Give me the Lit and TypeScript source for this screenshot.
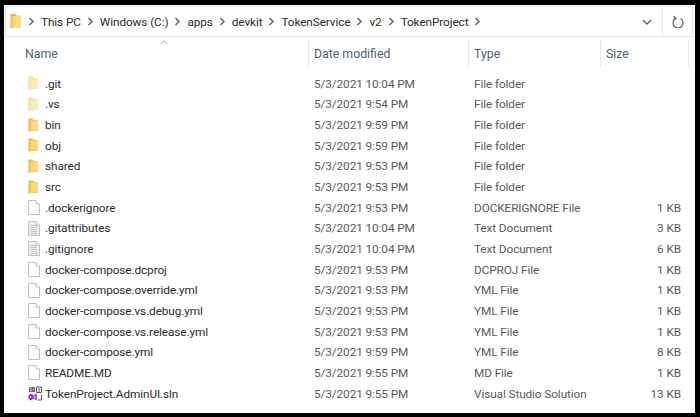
import { LitElement, html, css, svg } from "lit";
import { customElement } from "lit/decorators.js";

type Kind = "folder" | "hidden" | "file" | "text" | "sln";
interface Row { n: string; d: string; t: string; s: string; k: Kind; }

const rows: Row[] = [
  { n: ".git", d: "5/3/2021 10:04 PM", t: "File folder", s: "", k: "hidden" },
  { n: ".vs", d: "5/3/2021 9:54 PM", t: "File folder", s: "", k: "hidden" },
  { n: "bin", d: "5/3/2021 9:59 PM", t: "File folder", s: "", k: "folder" },
  { n: "obj", d: "5/3/2021 9:59 PM", t: "File folder", s: "", k: "folder" },
  { n: "shared", d: "5/3/2021 9:53 PM", t: "File folder", s: "", k: "folder" },
  { n: "src", d: "5/3/2021 9:53 PM", t: "File folder", s: "", k: "folder" },
  { n: ".dockerignore", d: "5/3/2021 9:53 PM", t: "DOCKERIGNORE File", s: "1 KB", k: "file" },
  { n: ".gitattributes", d: "5/3/2021 10:04 PM", t: "Text Document", s: "3 KB", k: "text" },
  { n: ".gitignore", d: "5/3/2021 10:04 PM", t: "Text Document", s: "6 KB", k: "text" },
  { n: "docker-compose.dcproj", d: "5/3/2021 9:53 PM", t: "DCPROJ File", s: "1 KB", k: "file" },
  { n: "docker-compose.override.yml", d: "5/3/2021 9:53 PM", t: "YML File", s: "1 KB", k: "file" },
  { n: "docker-compose.vs.debug.yml", d: "5/3/2021 9:53 PM", t: "YML File", s: "1 KB", k: "file" },
  { n: "docker-compose.vs.release.yml", d: "5/3/2021 9:53 PM", t: "YML File", s: "1 KB", k: "file" },
  { n: "docker-compose.yml", d: "5/3/2021 9:59 PM", t: "YML File", s: "8 KB", k: "file" },
  { n: "README.MD", d: "5/3/2021 9:55 PM", t: "MD File", s: "1 KB", k: "file" },
  { n: "TokenProject.AdminUI.sln", d: "5/3/2021 9:55 PM", t: "Visual Studio Solution", s: "13 KB", k: "sln" },
];

const crumbs = ["This PC", "Windows (C:)", "apps", "devkit", "TokenService", "v2", "TokenProject"];

const chevron = html`<svg class="chev" width="7" height="9" viewBox="0 0 7 9"><path d="M1.5 1 L5 4.5 L1.5 8" fill="none" stroke="#666" stroke-width="1.5"/></svg>`;

const folderShape = (w: number, h: number, cls: string) => html`<svg class=${cls} width=${w} height=${h} viewBox="0 0 10 15">
  <path d="M0.5 0.5 H4.5 L5.5 2 H9.5 V13 H0.5 Z" fill="#e9b949"/>
  <path d="M3 2.5 H9.5 V12.5 H3 L0.5 14.5 V4.5 Z" fill="#fbd978"/>
  <path d="M3 2.5 V12.5 L0.5 14.5 V4.5 Z" fill="#f3c65c"/>
</svg>`;

function icon(k: Kind) {
  if (k === "folder") return folderShape(10, 15, "");
  if (k === "hidden") return folderShape(10, 15, "faded");
  if (k === "sln")
    return html`<svg width="15" height="16" viewBox="0 0 15 16">
      <path d="M1 1 H7 V6 H1 Z" fill="#6e6e6e"/>
      <path d="M2 2 H4 M5 3.5 H6 M2 4.5 H4" stroke="#ddd"/>
      <path d="M8.5 1 H13.5 V6.5 H8.5 Z" fill="#fff" stroke="#555"/>
      <path d="M10 3 H12 M10 5 H12" stroke="#555"/>
      <path d="M13.5 9 V14 H10" fill="none" stroke="#555"/>
      <path d="M8.8 7.5 V14.5 L5.3 12.6 L3 14.5 L0.6 13 V9 L3 7.5 L5.3 9.4 Z" fill="#8a35cf"/>
      <path d="M2.1 9.9 V12.1 L3.7 11 Z M7.3 9.6 L5.5 11 L7.3 12.4 Z" fill="#fff"/>
    </svg>`;
  const lines = k === "text"
    ? svg`<path d="M2.5 4.5 H9.5 M2.5 6.5 H9.5 M2.5 8.5 H9.5 M2.5 10.5 H9.5 M2.5 12.5 H9.5" stroke="#c4c4c4"/>`
    : svg``;
  const fill = k === "text" ? "#f0f0f0" : "#fff";
  return html`<svg width="12" height="15" viewBox="0 0 12 15">
    <path d="M0.5 0.5 H8 L11.5 4 V14.5 H0.5 Z" fill=${fill} stroke="#c0c0c0"/>
    ${lines}
    <path d="M8 0.5 V4 H11.5" fill="#fff" stroke="#c0c0c0"/>
  </svg>`;
}

@customElement("app-root")
export class AppRoot extends LitElement {
  static styles = css`
    :host {
      display: block;
      width: 700px;
      height: 417px;
      background: #000;
      font-family: "Roboto", "Open Sans", "Liberation Sans", sans-serif;
      font-size: 11.8px;
      letter-spacing: -0.1px;
      color: #3a3a3a;
      overflow: hidden;
    }
    .window {
      box-sizing: border-box;
      width: 691px;
      height: 408px;
      margin: 5px 0 0 4px;
      background: #fff;
      padding: 1px 2px 0 1px;
    }
    .faded { opacity: 0.5; }
    .address {
      box-sizing: border-box;
      height: 31px;
      border: 1px solid #e4e4e4;
      display: flex;
      align-items: center;
      padding-left: 4px;
    }
    .address .top-folder { display: flex; margin-right: 7px; }
    .crumbs { display: flex; align-items: center; flex: 1; color: #2b2b2b; }
    .crumb { margin: 0 6px; white-space: nowrap; }
    .chev { flex: none; }
    .drop {
      width: 30px; height: 100%;
      display: flex; align-items: center; justify-content: center;
    }
    .refresh {
      box-sizing: border-box;
      width: 30px; height: 100%;
      border-left: 1px solid #e8e8e8;
      display: flex; align-items: center; justify-content: center;
    }
    .cols {
      display: grid;
      grid-template-columns: 304px 160px 132px 88px;
    }
    .header {
      height: 27px;
      margin-top: 3px;
      position: relative;
      color: #4c607a;
      font-size: 12.3px;
      letter-spacing: 0;
    }
    .header > div {
      box-sizing: border-box;
      display: flex;
      align-items: center;
      padding-left: 5px;
      border-right: 1px solid #e6e6e6;
    }
    .header > div:first-child { padding-left: 20px; }
    .sort { position: absolute; left: 155px; top: 0; }
    .list { margin-top: 6.4px; }
    .row { height: 20.67px; align-items: center; }
    .row > div { white-space: nowrap; }
    .name { display: flex; align-items: center; padding-left: 23px; color: #2b2b2b; }
    .ic { width: 17px; display: flex; align-items: center; }
    .date, .type { padding-left: 5px; color: #5a5a5a; }
    .size { text-align: right; padding-right: 8px; color: #5a5a5a; }
  `;

  render() {
    return html`<div class="window">
      <div class="address">
        <div class="top-folder">${folderShape(11, 17, "")}</div>
        ${chevron}
        <div class="crumbs">
          ${crumbs.map((c) => html`<span class="crumb">${c}</span>${chevron}`)}
        </div>
        <div class="drop"><svg width="12" height="8" viewBox="0 0 12 8"><path d="M2 2 L6 6 L10 2" fill="none" stroke="#666" stroke-width="1.5"/></svg></div>
        <div class="refresh"><svg width="12" height="13" viewBox="0 0 12 13"><path d="M3 2.6 A5 5 0 1 0 8 2.6" fill="none" stroke="#555" stroke-width="1.1" transform="translate(0.5 1)"/><path d="M1.5 1 L4 3.5 L1.5 5" fill="none" stroke="#555" stroke-width="1.1"/></svg></div>
      </div>
      <div class="cols header">
        <div>Name</div><div>Date modified</div><div>Type</div><div>Size</div>
        <svg class="sort" width="8" height="5" viewBox="0 0 8 5"><path d="M0.5 4 L4 0.8 L7.5 4" fill="none" stroke="#aaa"/></svg>
      </div>
      <div class="list">
        ${rows.map((r) => html`<div class="cols row">
          <div class="name"><span class="ic">${icon(r.k)}</span>${r.n}</div>
          <div class="date">${r.d}</div>
          <div class="type">${r.t}</div>
          <div class="size">${r.s}</div>
        </div>`)}
      </div>
    </div>`;
  }
}
